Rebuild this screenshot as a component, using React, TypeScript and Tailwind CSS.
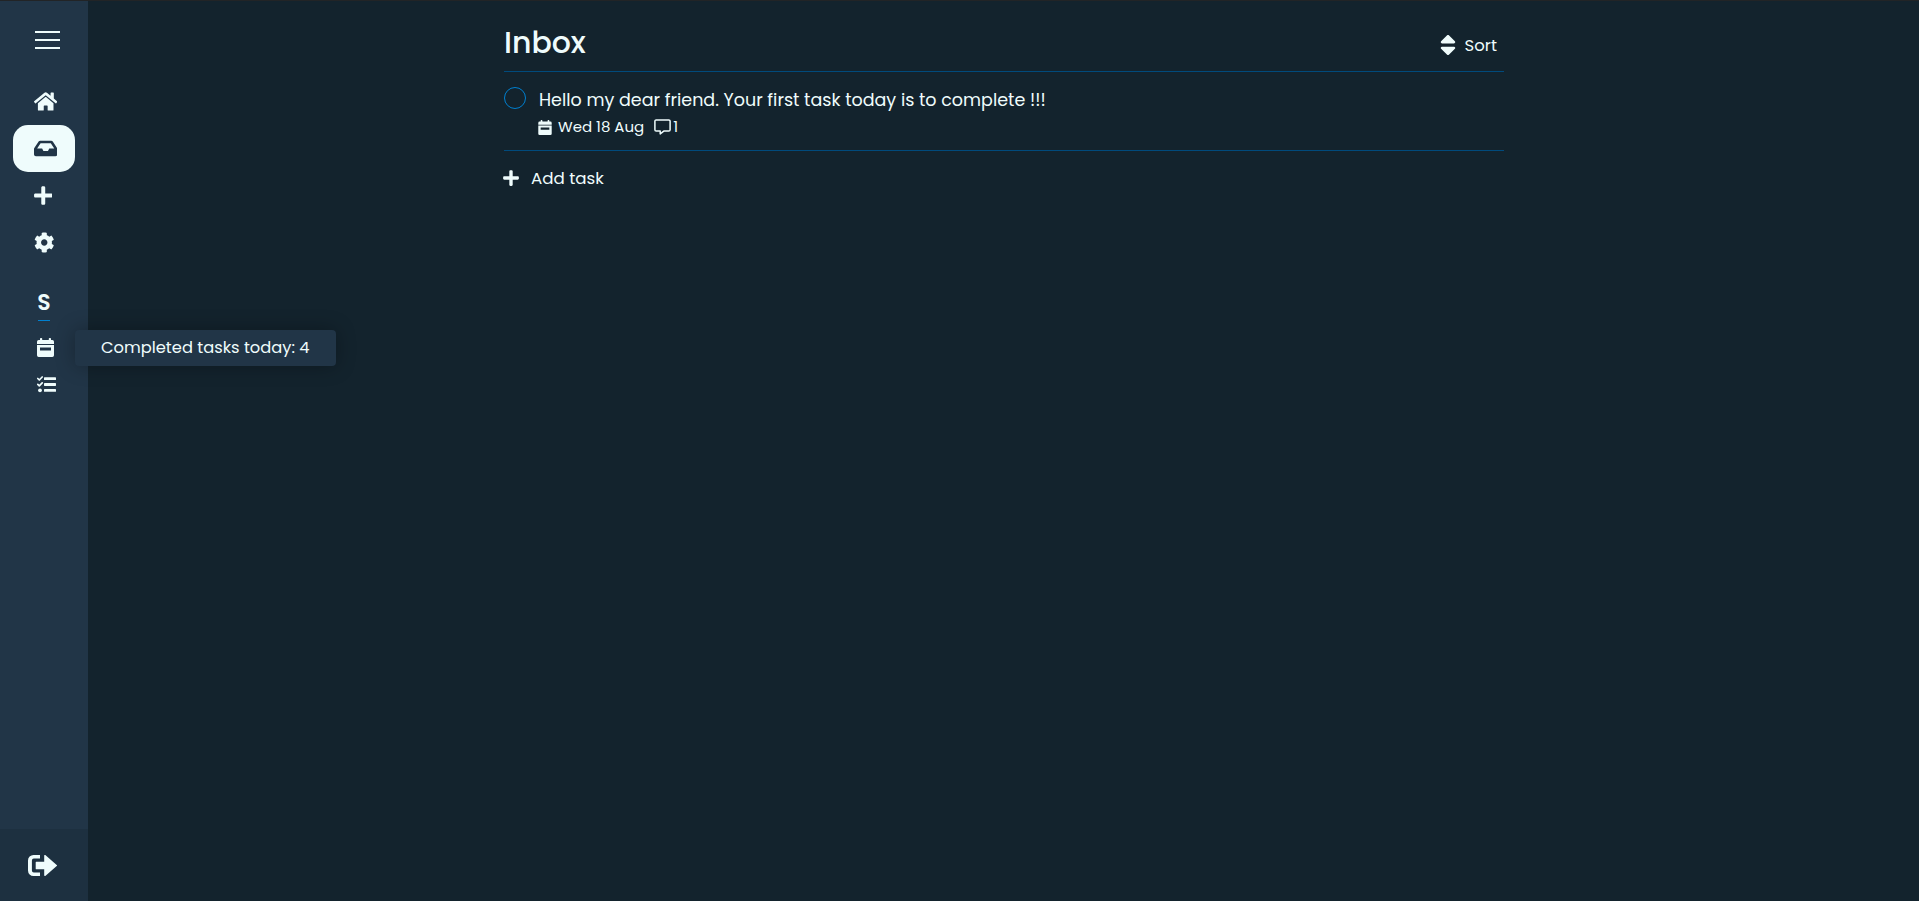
import type { ReactNode } from "react";
import { FaCog, FaHome, FaInbox, FaPlus, FaSort } from "react-icons/fa";

function CalendarIcon({ className }: { className: string }) {
  return (
    <svg viewBox="0 0 17 19" className={className} fill="currentColor">
      <path d="M1.7 2H3V.8a.8.8 0 0 1 .8-.8h.6a.8.8 0 0 1 .8.8V2h6.600V.8a.8.8 0 0 1 .8-.8h.6a.8.8 0 0 1 .8.8V2h1.300A1.700 1.700 0 0 1 17 3.700V6H0V3.700A1.700 1.700 0 0 1 1.700 2Z" />
      <path fillRule="evenodd" d="M0 7h17v10.300A1.700 1.700 0 0 1 15.300 19H1.700A1.700 1.700 0 0 1 0 17.300ZM3 9.500v3h11v-3Z" />
    </svg>
  );
}

function TasksIcon() {
  return (
    <svg viewBox="0 0 19 17" className="mt-[19px] ml-[37px] h-[17px] w-[19px]" fill="currentColor">
      <rect x="7" y="1.200" width="12" height="2.800" rx=".6" />
      <rect x="7" y="7.100" width="12" height="2.800" rx=".6" />
      <rect x="7" y="13" width="12" height="2.800" rx=".6" />
      <circle cx="3" cy="14.300" r="1.900" />
      <path d="m.8 2.500 1.500 1.500L5.200 1M.8 8.400l1.500 1.500 2.900-3" fill="none" stroke="currentColor" strokeWidth="1.700" strokeLinecap="round" strokeLinejoin="round" />
    </svg>
  );
}

function MessageIcon() {
  return (
    <svg viewBox="0 0 17 16" className="h-4 w-[17px]" fill="none" stroke="currentColor" strokeWidth="1.500" strokeLinejoin="round">
      <path d="M2.200.9h12.600a1.300 1.300 0 0 1 1.300 1.300v8.600a1.300 1.300 0 0 1-1.300 1.300H9.800L6.200 14.900V12.100H2.200A1.300 1.300 0 0 1 .9 10.800V2.200A1.300 1.300 0 0 1 2.200.9Z" />
    </svg>
  );
}

function LogoutIcon() {
  return (
    <svg viewBox="0 0 29 21" className="h-[21px] w-[29px]" fill="currentColor">
      <path d="M12 0H5.500A5.500 5.500 0 0 0 0 5.500v10A5.500 5.500 0 0 0 5.500 21H12v-3.600H5.800a1.900 1.900 0 0 1-1.900-1.900v-10a1.900 1.900 0 0 1 1.900-1.900H12Z" />
      <path d="M7.700 7.300a.6.6 0 0 1 .6-.6H16.200V.7a.7.7 0 0 1 1.100-.6l11.400 9.800a.8.8 0 0 1 0 1.200L17.300 20.900a.7.7 0 0 1-1.100-.6v-6H8.300a.6.6 0 0 1-.6-.6Z" />
    </svg>
  );
}

function NavItem({ active = false, children }: { active?: boolean; children: ReactNode }) {
  return (
    <button
      className={
        active
          ? "flex h-[47px] w-[62px] items-center rounded-[15px] bg-[#effcfc] pl-[20.500px] text-[#213547]"
          : "flex h-[47px] w-[62px] items-center pl-[20.500px]"
      }
    >
      {children}
    </button>
  );
}

function Sidebar() {
  return (
    <aside className="flex w-[88px] shrink-0 flex-col bg-[#213547]">
      <button className="mt-[30px] ml-[35px] flex w-[25px] flex-col gap-1.5" aria-label="Menu">
        <span className="h-0.5 w-full bg-[#effcfc]" />
        <span className="h-0.5 w-full bg-[#effcfc]" />
        <span className="h-0.5 w-full bg-[#effcfc]" />
      </button>
      <nav className="mt-[29px] ml-[13px] flex flex-col">
        <NavItem><FaHome className="h-[21px] w-[23.400px]" /></NavItem>
        <NavItem active><FaInbox className="h-[21px] w-[23.400px]" /></NavItem>
        <NavItem><FaPlus className="h-[21px] w-[18.500px]" /></NavItem>
        <NavItem><FaCog className="h-[21px] w-[20.500px]" /></NavItem>
      </nav>
      <div className="mt-[21px] flex flex-col items-center">
        <span className="h-[33px] text-[22px] leading-[32px] font-semibold">S</span>
        <span className="h-px w-3 bg-[#0080d0]" />
      </div>
      <div className="relative mt-[17px] flex h-[19px] pl-[37px]">
        <CalendarIcon className="h-[19px] w-[17px]" />
        <div className="absolute -top-2 left-[75px] flex h-9 w-[261px] items-center rounded bg-[#213547] pl-[26px] text-[16.300px] whitespace-nowrap shadow-[0_0_20px_rgba(0,0,0,0.3)]">
          Completed tasks today: 4
        </div>
      </div>
      <TasksIcon />
      <div className="mt-auto flex h-[72px] items-center bg-[#1d3040] pt-px pl-7">
        <LogoutIcon />
      </div>
    </aside>
  );
}

export default function App() {
  return (
    <div className="flex h-[901px] w-full overflow-hidden border-t border-[#222426] bg-[#13232d] font-['Poppins','Inter',sans-serif] text-[#effcfc]">
      <Sidebar />
      <main className="ml-[416px] w-[1000px]">
        <header className="flex h-[71px] items-start justify-between border-b border-[#004a7c] pr-[7px]">
          <h1 className="mt-[22px] text-[30px] leading-[40px] font-medium">Inbox</h1>
          <button className="mt-[30px] flex h-7 items-center text-[16.500px]">
            <FaSort className="mr-[7px] h-[26px] w-[20px]" />
            <span className="pt-[2px]">Sort</span>
          </button>
        </header>
        <section className="flex h-[79px] gap-[13px] border-b border-[#004a7c] pt-[15px]">
          <span className="h-[22px] w-[22px] rounded-full border border-[#0080d0]" />
          <div>
            <p className="pt-px text-[17.500px] leading-6">Hello my dear friend. Your first task today is to complete !!!</p>
            <div className="mt-[5px] flex h-5 items-center text-[15px]">
              <CalendarIcon className="-ml-px h-[15px] w-[14px]" />
              <span className="ml-[6px]">Wed 18 Aug</span>
              <span className="ml-[9.500px] flex items-center gap-[2.500px]"><MessageIcon /><span>1</span></span>
            </div>
          </div>
        </section>
        <button className="mt-[15px] flex h-6 items-center text-[16.700px]">
          <FaPlus className="-ml-px h-[18px] w-4" />
          <span className="ml-3 pt-px">Add task</span>
        </button>
      </main>
    </div>
  );
}
